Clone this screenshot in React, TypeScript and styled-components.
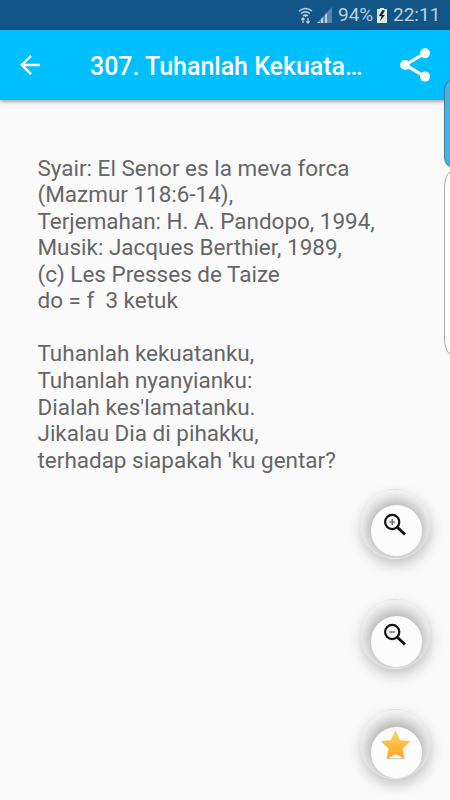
import React from "react";
import styled, { createGlobalStyle } from "styled-components";

const GlobalStyle = createGlobalStyle`
  * { box-sizing: border-box; }
  body { margin: 0; background: #fafafa; font-family: Roboto, "Noto Sans", sans-serif; }
`;

const Screen = styled.div`
  position: relative;
  width: 450px;
  height: 800px;
  overflow: hidden;
  display: flex;
  flex-direction: column;
  background: #fafafa;
`;

const StatusBar = styled.header`
  flex: none;
  height: 30px;
  padding: 1px 10px 0 0;
  display: flex;
  align-items: center;
  justify-content: flex-end;
  background: #125688;
  border-bottom: 1px solid #0f4a7c;
  color: #bdd0df;
  font-size: 19px;
  line-height: 28px;
  white-space: nowrap;

  svg { display: block; flex: none; }
`;

const SignalGroup = styled.div`
  display: flex;
  align-items: center;
  gap: 4px;
`;

const Percent = styled.span`
  width: 36px;
  margin: 0 3px 0 6px;
  font-size: 19px;
`;

const Clock = styled.span`
  width: 47px;
  margin-left: 6px;
`;

const Toolbar = styled.nav`
  flex: none;
  height: 70px;
  padding: 0 20px 0 20px;
  display: flex;
  align-items: center;
  background: #00bfff;
  box-shadow: 0 1px 5px rgba(0, 0, 0, 0.45);
`;

const IconButton = styled.button`
  flex: none;
  padding: 0;
  border: 0;
  background: none;
  color: #fff;
  svg { display: block; }
`;

const Title = styled.h1`
  flex: 1;
  margin: 3px 0 0 50px;
  color: #fff;
  font-size: 24.95px;
  line-height: 30px;
  font-weight: 500;
  white-space: nowrap;
`;

const Lyrics = styled.main`
  padding: 54.6px 37.5px 0;
  color: #666;
  font-size: 22.47px;
  line-height: 26.55px;
`;

const Verse = styled.p`
  margin: 0 0 26.55px;
  white-space: pre;
`;

const EdgeTab = styled.div<{ $top: number; $height: number; $filled?: boolean }>`
  position: absolute;
  left: 444px;
  top: ${(p) => p.$top}px;
  width: 16px;
  height: ${(p) => p.$height}px;
  border: 1px solid ${(p) => (p.$filled ? "#497b91" : "#aaa")};
  border-radius: ${(p) => (p.$filled ? "9px / 11px" : "10px / 20px")};
  background: ${(p) => (p.$filled ? "#40b6e7" : "#fdfdfd")};
`;

const Actions = styled.div`
  position: absolute;
  left: 360px;
  top: 489px;
  display: flex;
  flex-direction: column;
  gap: 40px;
`;

const FloatingButton = styled.button<{ $drop: number }>`
  width: 70px;
  height: 70px;
  padding: ${(p) => p.$drop}px 0 0 10.4px;
  border: 1px solid rgba(225, 225, 225, 0.55);
  border-radius: 50%;
  display: flex;
  background: radial-gradient(circle at 35px 39px, #b5b5b5 0, #bebebe 23px, #d2d2d2 28px, #e8e8e8 34px, #f6f6f6 39px);
  box-shadow: 1px 6px 13px rgba(0, 0, 0, 0.22);
`;

const Disc = styled.span<{ $lift: number; $inset: number }>`
  width: 50.5px;
  height: 50.5px;
  border-radius: 50%;
  background: #fcfcfc;
  svg {
    display: block;
    margin: ${(p) => 8 - p.$lift}px 0 0 ${(p) => p.$inset}px;
  }
`;

const WifiIcon = () => (
  <svg width="15" height="17" viewBox="0 0 15 17" fill="none" stroke="#c2d4e3" strokeWidth="1.5">
    <path d="M1 4Q7.5-1 14 4M3 6.5Q7.5 3 12 6.5M5 9Q7.5 7 10 9" />
    <path d="M5 16v-5M3.3 12.6 5 11l1.7 1.6M10 11v5M8.3 14.4 10 16l1.7-1.6" strokeWidth="1.3" />
    <circle cx="7.5" cy="9" r="1" fill="#c2d4e3" stroke="none" />
  </svg>
);

const SignalIcon = () => (
  <svg width="15" height="16" viewBox="0 0 15 16">
    <path d="M15 0v16H0z" fill="#5685a9" />
    <path d="M1 15h2v1H0zM4 12l2-2v6H4zM8 8l2-2v10H8z" fill="#bdd0df" />
  </svg>
);

const BatteryIcon = () => (
  <svg width="10" height="15" viewBox="0 0 10 15">
    <path d="M3 0h4v1h3v14H0V1h3z" fill="#e0ebdf" />
    <path d="M5.5 2 1.8 8h2.7L3 13l5-6H5.2L8 2.5z" fill="#102431" />
  </svg>
);

const BackIcon = () => (
  <svg width="20" height="20" viewBox="0 0 20 20" fill="none" stroke="#fff" strokeWidth="2.4">
    <path d="M20 10H2M11 .9 1.8 10 11 19.1" />
  </svg>
);

const ShareIcon = () => (
  <svg width="30" height="34" viewBox="0 0 30 34">
    <path d="M25 5.2 5.2 17 25 28.6" fill="none" stroke="#fff" strokeWidth="3.2" />
    <g fill="#fff">
      <circle cx="25" cy="5.2" r="5" />
      <circle cx="5.1" cy="17" r="5" />
      <circle cx="25" cy="28.6" r="5" />
    </g>
  </svg>
);

const ZoomIcon = ({ plus }: { plus?: boolean }) => (
  <svg width="24" height="24" viewBox="0 0 24 24" fill="none" stroke="#111">
    <circle cx="9.2" cy="9" r="7.1" strokeWidth="2.2" />
    <path d="m14.3 14.2 7.7 7.4" strokeWidth="2.8" />
    <path d={plus ? "M6.2 9h6M9.2 6v6" : "M6.2 9h6"} stroke="#555" strokeWidth="1.2" />
  </svg>
);

const StarIcon = () => (
  <svg width="30" height="30" viewBox="0 0 30 30">
    <defs>
      <linearGradient id="gold" x1="0" y1="0" x2="0" y2="1">
        <stop stopColor="#ffd35a" /><stop offset="1" stopColor="#ffa427" />
      </linearGradient>
    </defs>
    <path d="M7 28.6h15" stroke="#ccc" strokeWidth="1" />
    <path d="m14.5.8 4.2 9.7 10.4.9-7.8 7.1 2 10.3-8.8-4.8-8.7 4.8 2-10.3L.2 11.4l10-.9z" fill="url(#gold)" stroke="#f5b747" strokeWidth=".5" />
  </svg>
);

const verses = [
  [
    "Syair: El Senor es la meva forca",
    "(Mazmur 118:6-14),",
    "Terjemahan: H. A. Pandopo, 1994,",
    "Musik: Jacques Berthier, 1989,",
    "(c) Les Presses de Taize",
    "do = f  3 ketuk",
  ],
  [
    "Tuhanlah kekuatanku,",
    "Tuhanlah nyanyianku:",
    "Dialah kes'lamatanku.",
    "Jikalau Dia di pihakku,",
    "terhadap siapakah 'ku gentar?",
  ],
];

export default function App() {
  return (
    <Screen>
      <GlobalStyle />
      <StatusBar>
        <SignalGroup>
          <WifiIcon />
          <SignalIcon />
        </SignalGroup>
        <Percent>94%</Percent>
        <BatteryIcon />
        <Clock>22:11</Clock>
      </StatusBar>
      <Toolbar>
        <IconButton aria-label="Back"><BackIcon /></IconButton>
        <Title>307. Tuhanlah Kekuata…</Title>
        <IconButton aria-label="Share"><ShareIcon /></IconButton>
      </Toolbar>
      <Lyrics>
        {verses.map((lines) => <Verse key={lines[0]}>{lines.join("\n")}</Verse>)}
      </Lyrics>
      <EdgeTab $top={80} $height={87} $filled />
      <EdgeTab $top={171} $height={184} />
      <Actions>
        <FloatingButton $drop={15} aria-label="Zoom in"><Disc $lift={0} $inset={12}><ZoomIcon plus /></Disc></FloatingButton>
        <FloatingButton $drop={16} aria-label="Zoom out"><Disc $lift={1} $inset={12}><ZoomIcon /></Disc></FloatingButton>
        <FloatingButton $drop={17} aria-label="Favorite"><Disc $lift={5} $inset={9.3}><StarIcon /></Disc></FloatingButton>
      </Actions>
    </Screen>
  );
}
